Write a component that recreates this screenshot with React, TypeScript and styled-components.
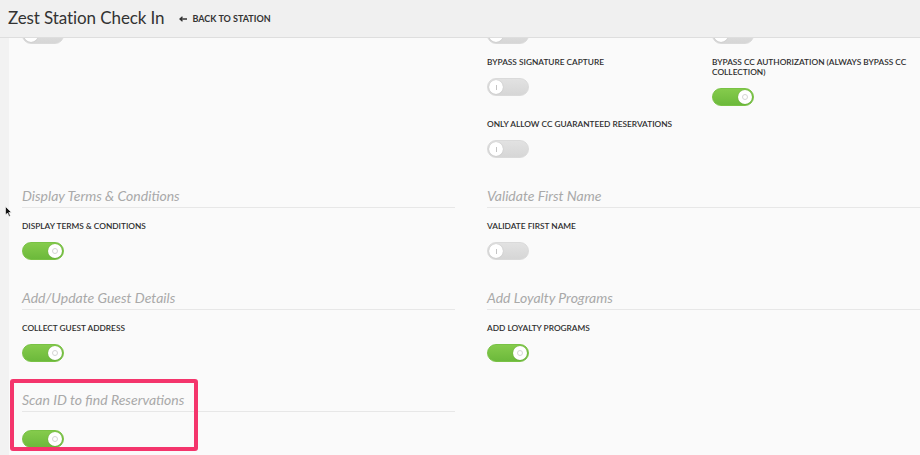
import React, { FC } from "react";
import styled, { createGlobalStyle } from "styled-components";

const GlobalStyle = createGlobalStyle`
    html, body {
        margin: 0;
        padding: 0;
        background: #fafafa;
        font-family: Lato, "Open Sans", sans-serif;
    }
`;

type SettingItem = {
    label?: string;
    on: boolean;
};

type SectionData = {
    title: string;
    items: SettingItem[];
    highlight?: boolean;
};

// the row above is scrolled under the header, only its toggles peek out
const topLeft: SettingItem[] = [{ on: false }];

const topRight: SettingItem[] = [
    { on: false },
    { on: false },
    { label: "Bypass signature capture", on: false },
    { label: "Bypass CC authorization (always bypass CC collection)", on: true },
    { label: "Only allow CC guaranteed reservations", on: false },
];

const sectionRows: [SectionData, SectionData | null][] = [
    [
        { title: "Display Terms & Conditions", items: [{ label: "Display terms & conditions", on: true }] },
        { title: "Validate First Name", items: [{ label: "Validate first name", on: false }] },
    ],
    [
        { title: "Add/Update Guest Details", items: [{ label: "Collect guest address", on: true }] },
        { title: "Add Loyalty Programs", items: [{ label: "Add loyalty programs", on: true }] },
    ],
    [{ title: "Scan ID to find Reservations", items: [{ on: true }], highlight: true }, null],
];

const Toggle: FC<{ on: boolean }> = ({ on }) => (
    <Track $on={on}>
        <Knob $on={on}>{on ? <OnMark /> : <OffMark />}</Knob>
    </Track>
);

const Setting: FC<SettingItem> = ({ label, on }) => (
    <SettingBox $bare={!label}>
        {label ? <Label>{label}</Label> : null}
        <Toggle on={on} />
    </SettingBox>
);

const Section: FC<SectionData> = ({ title, items, highlight }) => (
    <SectionBox>
        <SectionTitle>{title}</SectionTitle>
        {items.map((item, k) => (
            <Setting key={k} {...item} />
        ))}
        {highlight ? <Highlight /> : null}
    </SectionBox>
);

export default function App() {
    return (
        <Page>
            <GlobalStyle />
            <Header>
                <Title>Zest Station Check In</Title>
                <BackLink>
                    <svg width="8" height="6" viewBox="0 0 8 6">
                        <path d="M8 3H1.5M3.5 0.8L1 3l2.5 2.2" stroke="#333" strokeWidth="1.3" fill="none" />
                    </svg>
                    Back to station
                </BackLink>
            </Header>
            <Body>
                <SideStrip />
                <Scroller
                    ref={(el) => {
                        if (el) el.scrollTop = 37;
                    }}
                >
                    <Content>
                        <div>
                            {topLeft.map((item, k) => (
                                <Setting key={k} {...item} />
                            ))}
                        </div>
                        <SubGrid>
                            {topRight.map((item, k) => (
                                <Setting key={k} {...item} />
                            ))}
                        </SubGrid>
                        {sectionRows.map(([left, right], k) => (
                            <React.Fragment key={k}>
                                <Section {...left} />
                                {right ? <Section {...right} /> : <div />}
                            </React.Fragment>
                        ))}
                    </Content>
                </Scroller>
                <Cursor width="7" height="11" viewBox="0 0 7 11">
                    <path d="M0.5 0.5v8.5l2-2 1.6 3.4 1.3-0.6-1.6-3.3H6.5z" fill="#111" stroke="#fff" strokeWidth="0.6" />
                </Cursor>
            </Body>
        </Page>
    );
}

const Page = styled.div`
    height: 455px;
    display: flex;
    flex-direction: column;
    overflow: hidden;
`;

const Header = styled.header`
    height: 38px;
    box-sizing: border-box;
    flex-shrink: 0;
    display: flex;
    align-items: center;
    gap: 15px;
    padding: 0 0 2px 8px;
    background: #f0f0f0;
    border-bottom: 1px solid #dedede;
`;

const Title = styled.h1`
    margin: 0;
    font-size: 17px;
    font-weight: 400;
    color: #333;
    letter-spacing: -0.1px;
`;

const BackLink = styled.a`
    display: flex;
    align-items: center;
    gap: 5px;
    font-size: 9px;
    font-weight: 700;
    text-transform: uppercase;
    color: #333;
    padding-top: 2px;
`;

const Body = styled.div`
    flex: 1;
    display: flex;
    min-height: 0;
    position: relative;
`;

const SideStrip = styled.div`
    width: 9px;
    flex-shrink: 0;
    background: #f2f2f2;
`;

const Scroller = styled.div`
    flex: 1;
    overflow: hidden;
    background: #fafafa;
`;

const Content = styled.div`
    display: grid;
    grid-template-columns: 433px 1fr;
    column-gap: 32px;
    row-gap: 29px;
    align-items: start;
    padding: 20px 0 140px 13px;
`;

const SubGrid = styled.div`
    display: grid;
    grid-template-columns: 225px 1fr;
    row-gap: 13px;
    align-items: start;
`;

const SectionBox = styled.div`
    position: relative;
`;

const SectionTitle = styled.h3`
    margin: 0 0 13px;
    padding-bottom: 2px;
    font-size: 14px;
    line-height: 18px;
    font-style: italic;
    font-weight: 400;
    color: #a9a9a9;
    border-bottom: 1px solid #e7e7e7;
`;

const SettingBox = styled.div<{ $bare: boolean }>`
    display: flex;
    flex-direction: column;
    align-items: flex-start;
    padding-top: ${({ $bare }) => ($bare ? "5px" : "0")};
`;

const Label = styled.div`
    font-size: 8.3px;
    line-height: 10px;
    font-weight: 600;
    text-transform: uppercase;
    color: #2e2e2e;
    margin-bottom: 11px;
    padding-right: 8px;
`;

const Track = styled.span<{ $on: boolean }>`
    display: flex;
    align-items: center;
    justify-content: ${({ $on }) => ($on ? "flex-end" : "flex-start")};
    width: 42px;
    height: 18px;
    box-sizing: border-box;
    padding: 1px;
    border-radius: 9px;
    background: ${({ $on }) =>
        $on ? "linear-gradient(#85cb4c, #6cb93b)" : "linear-gradient(#e2e2e2, #d6d6d6)"};
    border: 1px solid ${({ $on }) => ($on ? "#79c245" : "#dadada")};
`;

const Knob = styled.span<{ $on: boolean }>`
    display: flex;
    align-items: center;
    justify-content: center;
    width: 14px;
    height: 14px;
    border-radius: 50%;
    background: #fff;
    box-shadow: 0 0 1px rgba(0, 0, 0, 0.25);
`;

const OnMark = styled.span`
    width: 4px;
    height: 4px;
    border-radius: 50%;
    border: 1px solid #d4d4d4;
`;

const OffMark = styled.span`
    width: 1px;
    height: 5px;
    background: #c4c4c4;
`;

const Highlight = styled.div`
    position: absolute;
    left: -12px;
    top: -12px;
    width: 188px;
    height: 72px;
    box-sizing: border-box;
    border: 4px solid #f4356c;
    border-radius: 3px;
    pointer-events: none;
`;

const Cursor = styled.svg`
    position: absolute;
    left: 5px;
    top: 168px;
`;
